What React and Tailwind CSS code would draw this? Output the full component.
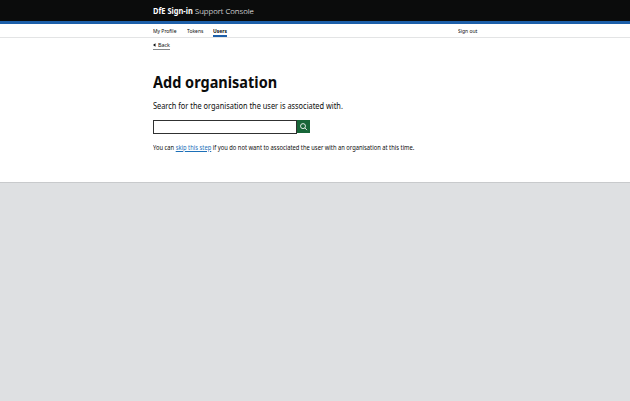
function NavLink({ children, className = '' }) {
  return (
    <a href="#" className={`h-[13px] whitespace-nowrap pt-px text-[5.8px] leading-[12px] ${className}`}>
      <span className="inline-block origin-left scale-x-[0.86]">{children}</span>
    </a>
  );
}

export default function App() {
  return (
    <div className="flex h-[401px] w-[630px] flex-col overflow-hidden bg-[#dee0e2] font-['Noto_Sans',sans-serif] text-[#0b0c0c]">
      <header className="h-6 shrink-0 border-b-[3px] border-[#1d5fa9] bg-[#0b0c0c] px-[153px]">
        <a href="#" className="flex h-[21px] items-center gap-[2px] whitespace-nowrap text-[8px] leading-[21px] text-white">
          <span className="w-10 origin-left scale-x-[0.93] font-bold">DfE Sign-in</span>
          <span className="origin-left scale-x-[0.97] font-light">Support Console</span>
        </a>
      </header>

      <nav className="flex h-[14px] shrink-0 justify-between border-b border-[#e3e4e5] bg-white pl-[153px]">
        <div className="flex">
          <NavLink className="w-[33.5px]">My Profile</NavLink>
          <NavLink className="w-[26.5px]">Tokens</NavLink>
          <NavLink className="w-[14px] border-b-2 border-[#1d5fa9] font-bold">Users</NavLink>
        </div>
        <NavLink className="w-[172.3px]">Sign out</NavLink>
      </nav>

      <main className="flex h-[145px] shrink-0 flex-col items-start border-b border-[#c8cacc] bg-white px-[153px] pt-[3px]">
        <a href="#" className="flex h-[9px] w-[17px] items-center gap-[2px] border-b border-[#85888a] text-[5.8px] leading-[8px]">
          <svg viewBox="0 0 3 4" className="h-[4px] w-[2.5px] shrink-0" fill="currentColor">
            <path d="M3 0v4L0 2z" />
          </svg>
          <span className="origin-left scale-x-[0.93]">Back</span>
        </a>
        <h1 className="mt-[22px] h-[20px] origin-left scale-x-[0.89] whitespace-nowrap text-[16.3px] leading-[20px] font-bold">Add organisation</h1>
        <p className="mt-[8px] h-[12px] origin-left scale-x-[0.913] whitespace-nowrap text-[8.1px] leading-[12px]">
          Search for the organisation the user is associated with.
        </p>
        <form className="mt-[8px] flex h-[14px]">
          <input aria-label="Organisation" className="h-[14px] w-36 rounded-none border border-[#303131] bg-white outline-none" />
          <button type="button" aria-label="Search" className="flex h-[13px] w-[13px] items-center justify-center bg-[#176638] text-white">
            <svg viewBox="0 0 8 8" className="h-2 w-2" fill="none" stroke="currentColor" strokeWidth="0.85">
              <circle cx="3" cy="3.1" r="2.5" />
              <path d="M4.8 4.9 7 7.1" />
            </svg>
          </button>
        </form>
        <p className="mt-[9px] h-[10px] origin-left scale-x-[0.906] whitespace-nowrap text-[6.4px] leading-[10px]">
          You can <a href="#" className="text-[#1d70b8] underline decoration-[0.5px] underline-offset-1">skip this step</a> if you do not want to associated the user with an organisation at this time.
        </p>
      </main>
    </div>
  );
}
